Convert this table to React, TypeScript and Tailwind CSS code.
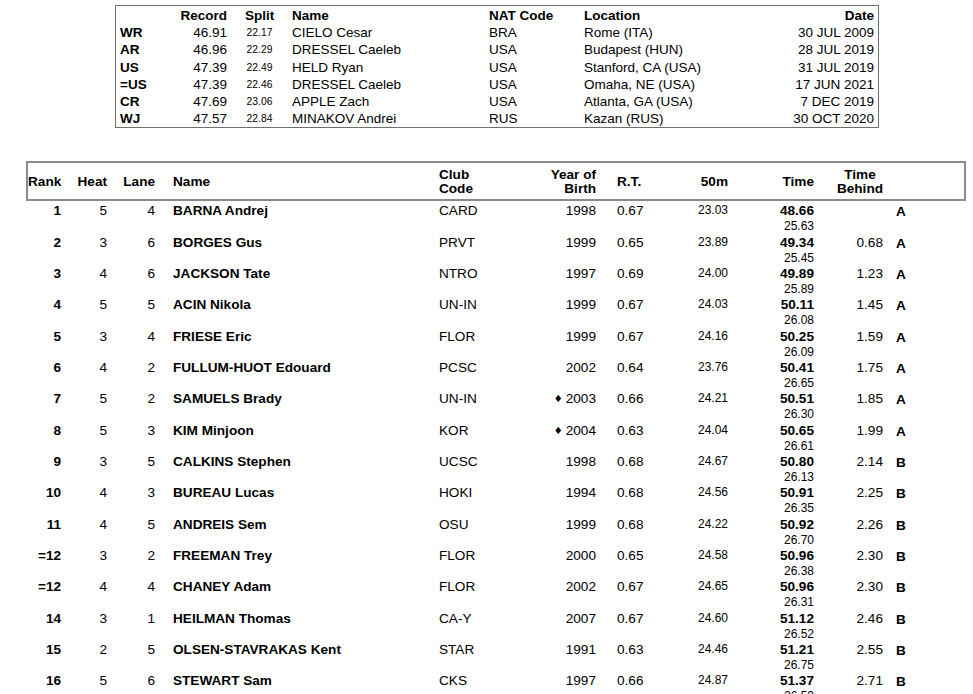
import React from 'react';

type Rec = [string, string, string, string, string, string, string];

const records: Rec[] = [
  ['WR', '46.91', '22.17', 'CIELO Cesar', 'BRA', 'Rome (ITA)', '30 JUL 2009'],
  ['AR', '46.96', '22.29', 'DRESSEL Caeleb', 'USA', 'Budapest (HUN)', '28 JUL 2019'],
  ['US', '47.39', '22.49', 'HELD Ryan', 'USA', 'Stanford, CA (USA)', '31 JUL 2019'],
  ['=US', '47.39', '22.46', 'DRESSEL Caeleb', 'USA', 'Omaha, NE (USA)', '17 JUN 2021'],
  ['CR', '47.69', '23.06', 'APPLE Zach', 'USA', 'Atlanta, GA (USA)', '7 DEC 2019'],
  ['WJ', '47.57', '22.84', 'MINAKOV Andrei', 'RUS', 'Kazan (RUS)', '30 OCT 2020'],
];

type Result = {
  rank: string;
  heat: string;
  lane: string;
  name: string;
  club: string;
  yob: string;
  junior?: boolean;
  rt: string;
  s50: string;
  time: string;
  split: string;
  behind: string;
  final: string;
};

const results: Result[] = [
  { rank: '1', heat: '5', lane: '4', name: 'BARNA Andrej', club: 'CARD', yob: '1998', rt: '0.67', s50: '23.03', time: '48.66', split: '25.63', behind: '', final: 'A' },
  { rank: '2', heat: '3', lane: '6', name: 'BORGES Gus', club: 'PRVT', yob: '1999', rt: '0.65', s50: '23.89', time: '49.34', split: '25.45', behind: '0.68', final: 'A' },
  { rank: '3', heat: '4', lane: '6', name: 'JACKSON Tate', club: 'NTRO', yob: '1997', rt: '0.69', s50: '24.00', time: '49.89', split: '25.89', behind: '1.23', final: 'A' },
  { rank: '4', heat: '5', lane: '5', name: 'ACIN Nikola', club: 'UN-IN', yob: '1999', rt: '0.67', s50: '24.03', time: '50.11', split: '26.08', behind: '1.45', final: 'A' },
  { rank: '5', heat: '3', lane: '4', name: 'FRIESE Eric', club: 'FLOR', yob: '1999', rt: '0.67', s50: '24.16', time: '50.25', split: '26.09', behind: '1.59', final: 'A' },
  { rank: '6', heat: '4', lane: '2', name: 'FULLUM-HUOT Edouard', club: 'PCSC', yob: '2002', rt: '0.64', s50: '23.76', time: '50.41', split: '26.65', behind: '1.75', final: 'A' },
  { rank: '7', heat: '5', lane: '2', name: 'SAMUELS Brady', club: 'UN-IN', yob: '2003', junior: true, rt: '0.66', s50: '24.21', time: '50.51', split: '26.30', behind: '1.85', final: 'A' },
  { rank: '8', heat: '5', lane: '3', name: 'KIM Minjoon', club: 'KOR', yob: '2004', junior: true, rt: '0.63', s50: '24.04', time: '50.65', split: '26.61', behind: '1.99', final: 'A' },
  { rank: '9', heat: '3', lane: '5', name: 'CALKINS Stephen', club: 'UCSC', yob: '1998', rt: '0.68', s50: '24.67', time: '50.80', split: '26.13', behind: '2.14', final: 'B' },
  { rank: '10', heat: '4', lane: '3', name: 'BUREAU Lucas', club: 'HOKI', yob: '1994', rt: '0.68', s50: '24.56', time: '50.91', split: '26.35', behind: '2.25', final: 'B' },
  { rank: '11', heat: '4', lane: '5', name: 'ANDREIS Sem', club: 'OSU', yob: '1999', rt: '0.68', s50: '24.22', time: '50.92', split: '26.70', behind: '2.26', final: 'B' },
  { rank: '=12', heat: '3', lane: '2', name: 'FREEMAN Trey', club: 'FLOR', yob: '2000', rt: '0.65', s50: '24.58', time: '50.96', split: '26.38', behind: '2.30', final: 'B' },
  { rank: '=12', heat: '4', lane: '4', name: 'CHANEY Adam', club: 'FLOR', yob: '2002', rt: '0.67', s50: '24.65', time: '50.96', split: '26.31', behind: '2.30', final: 'B' },
  { rank: '14', heat: '3', lane: '1', name: 'HEILMAN Thomas', club: 'CA-Y', yob: '2007', rt: '0.67', s50: '24.60', time: '51.12', split: '26.52', behind: '2.46', final: 'B' },
  { rank: '15', heat: '2', lane: '5', name: 'OLSEN-STAVRAKAS Kent', club: 'STAR', yob: '1991', rt: '0.63', s50: '24.46', time: '51.21', split: '26.75', behind: '2.55', final: 'B' },
  { rank: '16', heat: '5', lane: '6', name: 'STEWART Sam', club: 'CKS', yob: '1997', rt: '0.66', s50: '24.87', time: '51.37', split: '26.50', behind: '2.71', final: 'B' },
];

const RecordsBox = () => (
  <div className="ml-[115px] mt-[5px] w-[764px] border border-[#6f6f6f] pt-[1px] text-[13.5px] leading-[17.2px]">
    <div className="flex h-[17.2px] font-bold">
      <div className="w-[64px]" />
      <div className="w-[47px] text-right">Record</div>
      <div className="w-[65px] text-center">Split</div>
      <div className="w-[197px]">Name</div>
      <div className="w-[95px]">NAT Code</div>
      <div className="w-[190px]">Location</div>
      <div className="w-[100px] text-right">Date</div>
    </div>
    {records.map((r) => (
      <div key={r[0]} className="flex h-[17.2px]">
        <div className="w-[64px] pl-[4px] font-bold">{r[0]}</div>
        <div className="w-[47px] text-right">{r[1]}</div>
        <div className="w-[65px] text-center text-[10.3px]">{r[2]}</div>
        <div className="w-[197px]">{r[3]}</div>
        <div className="w-[95px]">{r[4]}</div>
        <div className="w-[190px]">{r[5]}</div>
        <div className="w-[100px] text-right">{r[6]}</div>
      </div>
    ))}
  </div>
);

const ResultsHeader = () => (
  <div className="ml-[26px] mt-[33px] flex h-[40px] w-[940px] items-center border-2 border-[#8a8a8a] pt-[2px] text-[13.6px] font-bold leading-[14px]">
    <div className="w-[33px]">Rank</div>
    <div className="w-[46px] text-right">Heat</div>
    <div className="w-[48px] text-right">Lane</div>
    <div className="w-[284px] pl-[18px]">Name</div>
    <div className="w-[81px]">
      Club
      <br />
      Code
    </div>
    <div className="w-[76px] text-right">
      Year of
      <br />
      Birth
    </div>
    <div className="w-[84px] pl-[21px]">R.T.</div>
    <div className="w-[48px] text-right">50m</div>
    <div className="w-[86px] text-right">Time</div>
    <div className="flex w-[69px] justify-end">
      <div className="text-center">
        Time
        <br />
        Behind
      </div>
    </div>
  </div>
);

const ResultRow = ({ r }: { r: Result }) => (
  <div className="flex h-[31.33px] items-start text-[13.6px] leading-[16px]">
    <div className="w-[33px] text-right font-bold">{r.rank}</div>
    <div className="w-[46px] text-right">{r.heat}</div>
    <div className="w-[48px] text-right">{r.lane}</div>
    <div className="w-[284px] pl-[18px] font-bold">{r.name}</div>
    <div className="w-[81px]">{r.club}</div>
    <div className="w-[76px] text-right">
      {r.junior && (
        <span className="mr-[3px] font-['DejaVu_Sans',sans-serif] text-[10px] align-[1px]">♦</span>
      )}
      {r.yob}
    </div>
    <div className="w-[84px] pl-[21px]">{r.rt}</div>
    <div className="w-[48px] text-right text-[12px] leading-[14px]">{r.s50}</div>
    <div className="w-[86px] text-right">
      <div className="font-bold">{r.time}</div>
      <div className="text-[12px] leading-[14px]">{r.split}</div>
    </div>
    <div className="w-[69px] text-right">{r.behind}</div>
    <div className="pl-[13px] pt-[1px] font-bold">{r.final}</div>
  </div>
);

export default function App() {
  return (
    <div className="h-[694px] w-[973px] overflow-hidden bg-white font-['Liberation_Sans',Arial,sans-serif] text-black">
      <RecordsBox />
      <ResultsHeader />
      <div className="ml-[28px] mt-[2px]">
        {results.map((r, i) => (
          <ResultRow key={i} r={r} />
        ))}
      </div>
    </div>
  );
}
